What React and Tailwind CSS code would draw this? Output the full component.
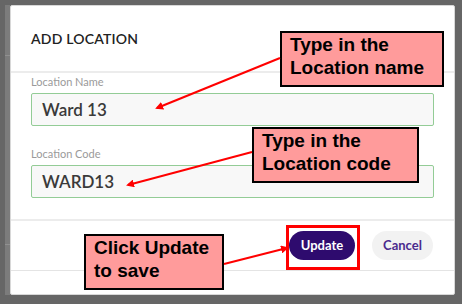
import React from 'react';

const Callout = ({ className, lines }) => (
  <div
    className={`absolute bg-[#ff9b9b] border-2 border-black px-[8px] pb-[6px] text-[19px] leading-[23px] font-bold text-black ${className}`}
    style={{ fontFamily: '"Liberation Sans", Arial, sans-serif' }}
  >
    {lines.map((l) => (
      <div key={l}>{l}</div>
    ))}
  </div>
);

const Field = ({ label, value, className }) => (
  <div className={className}>
    <div className="text-[11px] leading-[14px] text-[#9a9a9a] mb-[4px]">{label}</div>
    <div className="h-[33px] flex items-center px-[10px] bg-[#f8f8f8] border border-[#93cc96] rounded-[2px] text-[17px] font-semibold text-[#3a3a3a]">
      {value}
    </div>
  </div>
);

const App = () => {
  return (
    <div
      className="relative w-[462px] h-[304px] bg-[#666666] pt-[5px] pl-[5px] pr-[7px] pb-[9px] overflow-hidden"
      style={{ fontFamily: 'Lato, "Open Sans", sans-serif' }}
    >
      <div className="flex h-full">
        <div className="w-[5px] bg-[#7c7c7c] flex flex-col justify-between py-[50px]">
          <div className="h-px bg-[#909090]" />
          <div className="h-px bg-[#909090]" />
        </div>
        <div className="flex-1 bg-white border border-[#d8d8d8] rounded-[2px] flex flex-col">
          <div className="h-[65px] flex items-center px-[20px] text-[14px] font-semibold tracking-[0.2px] text-[#222]">
            ADD LOCATION
          </div>
          <div className="h-[2px] bg-[#ececec]" />
          <div className="px-[20px] pt-[2px]">
            <Field label="Location Name" value="Ward 13" />
            <Field label="Location Code" value="WARD13" className="mt-[21px]" />
          </div>
          <div className="h-[2px] bg-[#ececec] mt-[21px]" />
          <div className="h-[49px] flex items-center justify-end gap-[17px] pr-[21px]">
            <button className="h-[29px] w-[66px] rounded-full bg-[#2e0b6e] text-white text-[13px] font-bold">
              Update
            </button>
            <button className="h-[29px] w-[61px] rounded-full bg-[#f2f2f2] text-[#4b2b8e] text-[13px] font-bold">
              Cancel
            </button>
          </div>
          <div className="h-px bg-[#e4e4e4]" />
        </div>
      </div>

      <div className="absolute left-[286px] top-[225px] w-[74px] h-[45px] border-[3px] border-[#ff0000]" />

      <Callout className="left-[280px] top-[31px] w-[164px] h-[56px]" lines={['Type in the', 'Location name']} />
      <Callout className="left-[252px] top-[127px] w-[167px] h-[56px]" lines={['Type in the', 'Location code']} />
      <Callout className="left-[84px] top-[234px] w-[140px] h-[56px]" lines={['Click Update', 'to save']} />

      <svg className="absolute inset-0 pointer-events-none" width="462" height="304">
        <defs>
          <marker id="head" markerWidth="8" markerHeight="8" refX="6" refY="4" orient="auto" markerUnits="userSpaceOnUse">
            <path d="M0,0 L8,4 L0,8 Z" fill="#ff0000" />
          </marker>
        </defs>
        <line x1="280" y1="58" x2="157" y2="108" stroke="#ff0000" strokeWidth="2" markerEnd="url(#head)" />
        <line x1="252" y1="152" x2="128" y2="185" stroke="#ff0000" strokeWidth="2" markerEnd="url(#head)" />
        <line x1="224" y1="264" x2="287" y2="248" stroke="#ff0000" strokeWidth="2" markerEnd="url(#head)" />
      </svg>
    </div>
  );
};

export default App;
